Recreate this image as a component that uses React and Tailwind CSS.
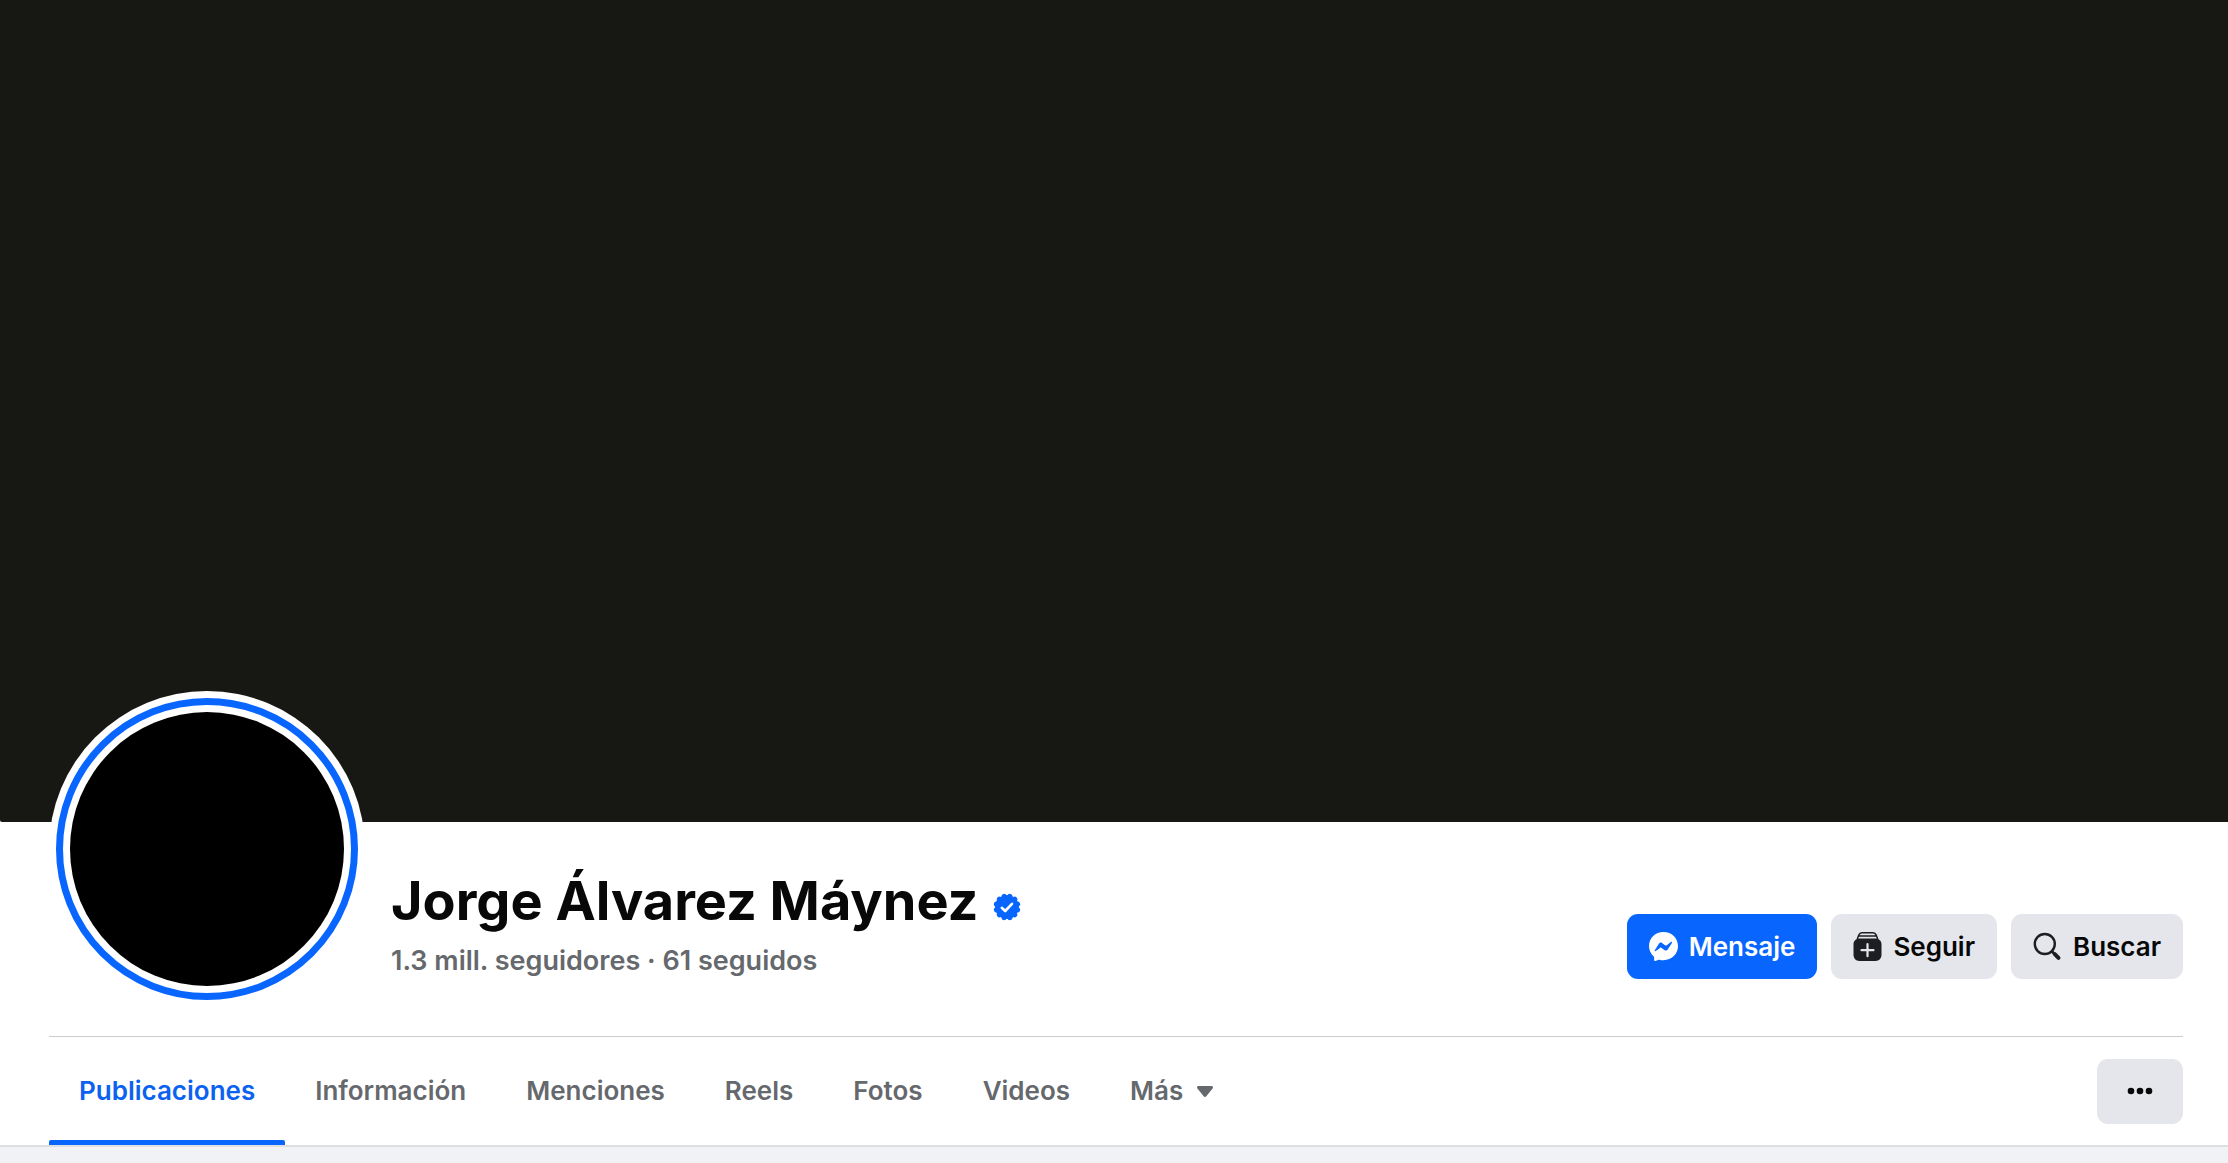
import React, { useState } from "react";

const tabs = ["Publicaciones", "Información", "Menciones", "Reels", "Fotos", "Videos"];

const badgeAngles = [0, 30, 60, 90, 120, 150, 180, 210, 240, 270, 300, 330];

const VerifiedBadge = () => (
  <svg viewBox="0 0 28 28" className="size-7" role="img" aria-label="Cuenta verificada">
    <circle cx="14" cy="14" r="12" fill="#0866ff" />
    {badgeAngles.map((angle) => (
      <circle
        key={angle}
        cx="14"
        cy="3"
        r="2.5"
        fill="#0866ff"
        transform={`rotate(${angle + 15} 14 14)`}
      />
    ))}
    <path
      fill="none"
      stroke="#fff"
      strokeWidth="2.6"
      strokeLinecap="round"
      strokeLinejoin="round"
      d="M8.8 14.8l3.4 3.2 6.8-7.2"
    />
  </svg>
);

const MessengerIcon = () => (
  <svg viewBox="0 0 29 29" className="size-[29px]" aria-hidden="true">
    <path
      fill="#fff"
      d="M14.5 0C6.300 0 0 6 0 14.100c0 4.200 1.800 7.900 4.700 10.400.3.200.4.500.4.900v2.500c0 .8.800 1.300 1.500 1l2.900-1.200c.3-.1.500-.1.800 0 1.300.4 2.700.5 4.200.5C22.700 28.200 29 22.200 29 14.100S22.700 0 14.500 0z"
    />
    <path
      fill="#0866ff"
      d="M5.800 18.200l4.200-6.700c.7-1 2-1.300 3-.6l3.400 2.500c.3.200.7.200 1 0l4.500-3.400c.6-.5 1.400.3 1 .9l-4.200 6.700c-.7 1-2 1.300-3 .6l-3.400-2.500c-.3-.2-.7-.2-1 0l-4.500 3.400c-.6.500-1.400-.3-1-.9z"
    />
  </svg>
);

const FollowIcon = () => (
  <svg viewBox="0 0 29 29" className="size-[29px]" aria-hidden="true">
    <path
      fill="none"
      stroke="#1c1e21"
      strokeWidth="1.5"
      strokeLinecap="round"
      strokeLinejoin="round"
      d="M4.400 6.800l1.400-3.700C6.400 1.600 7.400.8 9 .8h11c1.600 0 2.600.8 3.200 2.300l1.400 3.700M6 4h17"
    />
    <path
      fill="#1c1e21"
      d="M6.200 6.600h16.600c3.200 0 5.700 2.500 5.700 5.700v10.500c0 3.500-2.400 6.200-5.900 6.200H6.400C2.900 29 .5 26.300.5 22.800V12.300c0-3.200 2.500-5.700 5.700-5.700z"
    />
    <path
      fill="none"
      stroke="#e4e6eb"
      strokeWidth="2.2"
      strokeLinecap="round"
      d="M14.5 12.200v12M8.500 18.200h12"
    />
  </svg>
);

const SearchIcon = () => (
  <svg viewBox="0 0 29 29" className="size-[29px]" aria-hidden="true">
    <circle cx="11.8" cy="12" r="10" fill="none" stroke="#1c1e21" strokeWidth="2.4" />
    <path stroke="#1c1e21" strokeWidth="2.6" d="M18.5 19l3 3" />
    <path stroke="#1c1e21" strokeWidth="4" strokeLinecap="round" d="M21.8 22.200l3.700 3.700" />
  </svg>
);

const ActionButton = ({ icon, label, primary }) => (
  <button
    type="button"
    className={`flex h-[65px] items-center gap-[11px] rounded-[11px] px-[22px] text-[26px] leading-9 font-semibold ${
      primary ? "bg-[#0866ff] text-white" : "bg-[#e4e6eb] text-[#080809]"
    }`}
  >
    {icon}
    {label}
  </button>
);

const ProfileHeader = () => (
  <div className="flex h-[214px] items-start gap-[26px]">
    {/* Avatar with story ring, pulled up over the cover */}
    <a
      href="#historia"
      aria-label="Ver historia de Jorge Álvarez Máynez"
      className="-mt-[131px] shrink-0 rounded-full bg-white p-[7px]"
    >
      <div className="size-[302px] rounded-full border-[7px] border-[#0866ff] bg-white p-[7px]">
        <div className="size-full rounded-full bg-black" />
      </div>
    </a>
    <div className="min-w-0 flex-1 pt-12">
      <div className="flex items-center gap-[14px]">
        <h1 className="text-[54px] leading-[62px] font-bold text-[#080809]">
          Jorge Álvarez Máynez
        </h1>
        <div className="pt-3">
          <VerifiedBadge />
        </div>
      </div>
      <p className="mt-[11px] text-[27px] leading-9 font-semibold text-[#65686c]">
        <a href="#seguidores">1.3 mill. seguidores</a> · <a href="#seguidos">61 seguidos</a>
      </p>
    </div>
    <div className="flex gap-[14px] pt-[92px]">
      <ActionButton primary icon={<MessengerIcon />} label="Mensaje" />
      <ActionButton icon={<FollowIcon />} label="Seguir" />
      <ActionButton icon={<SearchIcon />} label="Buscar" />
    </div>
  </div>
);

const TabBar = () => {
  const [active, setActive] = useState("Publicaciones");

  return (
    <div className="flex items-center justify-between border-t border-[#c9ccd1]">
      <nav className="flex h-[108px] text-[26px] leading-9 font-semibold">
        {tabs.map((tab) => (
          <a
            key={tab}
            href={`#${tab.toLowerCase()}`}
            onClick={() => setActive(tab)}
            className={`flex flex-col px-[30px] ${
              tab === active ? "text-[#0b62f0]" : "text-[#65686c]"
            }`}
          >
            <span className="flex flex-1 items-center">{tab}</span>
            {tab === active && (
              <span className="-mx-[30px] -mt-[5px] h-[5px] rounded-t-xs bg-[#0866ff]" />
            )}
          </a>
        ))}
        <button
          type="button"
          aria-haspopup="menu"
          className="flex items-center gap-[14px] px-[30px] text-[#65686c]"
        >
          Más
          <svg viewBox="0 0 16 11" className="h-[11px] w-4" aria-hidden="true">
            <path
              fill="#65686c"
              d="M1.5 0h13c1.300 0 1.900 1.400 1.100 2.400l-6.300 7.900c-.7.900-1.900.9-2.600 0L.4 2.400C-.4 1.400.2 0 1.500 0z"
            />
          </svg>
        </button>
      </nav>
      <button
        type="button"
        aria-label="Más opciones"
        className="flex h-[65px] w-[86px] items-center justify-center rounded-[11px] bg-[#e4e6eb]"
      >
        <svg viewBox="0 0 26 8" className="h-2 w-[26px]" aria-hidden="true">
          <circle cx="4" cy="4" r="3.3" fill="#080809" />
          <circle cx="13" cy="4" r="3.3" fill="#080809" />
          <circle cx="22" cy="4" r="3.3" fill="#080809" />
        </svg>
      </button>
    </div>
  );
};

const App = () => {
  return (
    <div className="min-h-screen bg-[#f0f2f5] font-['Inter',sans-serif]">
      <header className="border-b-2 border-[#dddfe0] bg-white">
        {/* Cover photo */}
        <div className="aspect-[2228/822] w-full rounded-bl-xs bg-[#171714]" />
        <div className="pr-[45px] pl-[49px]">
          <ProfileHeader />
          <TabBar />
        </div>
      </header>
    </div>
  );
};

export default App;
